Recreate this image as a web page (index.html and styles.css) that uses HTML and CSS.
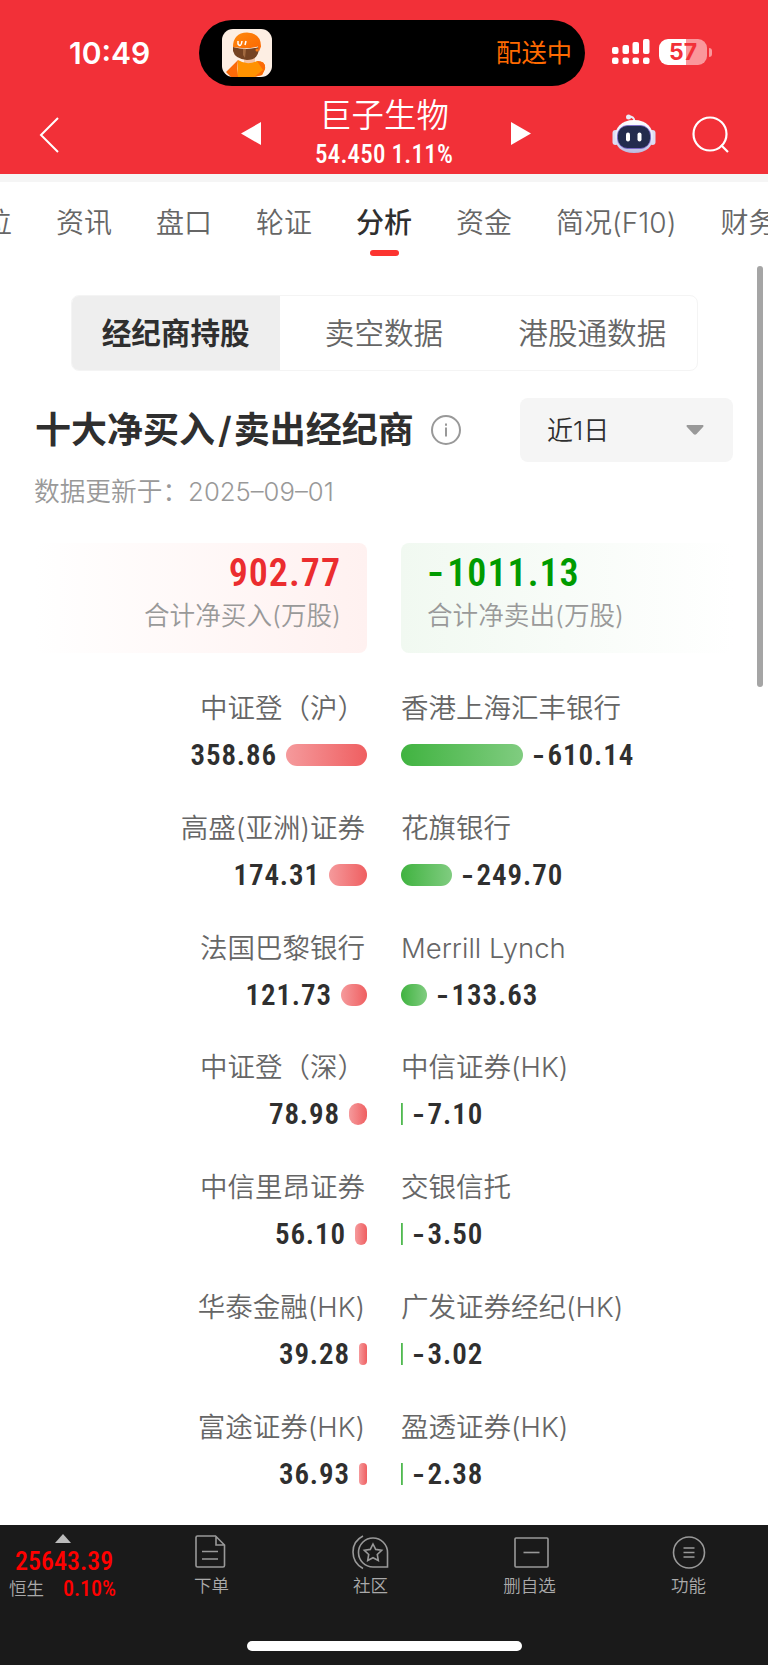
FILE: index.html
```html
<!DOCTYPE html>
<html lang="zh-CN">
<head>
    <meta charset="UTF-8">
    <meta name="viewport" content="width=device-width, initial-scale=1.0">
    <title>巨子生物 - 分析</title>
    <link rel="stylesheet" href="styles.css">
</head>
<body>
    <header class="header">
        <div class="status-bar">
            <span class="time">10:49</span>
            <div class="island">
                <svg class="courier" viewBox="0 0 50 48">
                    <defs>
                        <linearGradient id="helmet" x1="0" y1="0" x2="1" y2="1">
                            <stop offset="0" stop-color="#ff8a10"/>
                            <stop offset="1" stop-color="#fa6500"/>
                        </linearGradient>
                    </defs>
                    <rect width="50" height="48" rx="11" fill="#fdeee3"/>
                    <path d="M22 28h11v8H22z" fill="#f3c3a4"/>
                    <path d="M16 31q9 6 19 1 9 0 8 8l-3 6-8 2H15z" fill="#ff9200"/>
                    <path d="M4 43L16 31l-1 9 1 8H9zM35 32q9 0 8 8l-3 6-8 2 9-7z" fill="#fb6a08"/>
                    <path d="M11 18q14 4 26 0 0 13-12 13-12-1-14-9z" fill="#754322"/>
                    <path d="M21 20h3l-1 9-2-3z" fill="#a1693f"/>
                    <path d="M11 18Q11 4 25 3.500q14 0.500 14 14l-2 5-1-5q-12 3-25 0.500z" fill="url(#helmet)"/>
                    <path d="M16 12v3q3 4 4-3m3 4l1-4" fill="none" stroke="#fff" stroke-width="1.500"/>
                    <circle cx="35" cy="21" r="1.500" fill="#fb7a12"/>
                </svg>
                <span class="delivery">配送中</span>
            </div>
            <svg class="signal" viewBox="0 0 38 26" fill="#fff">
                <rect x="0" y="8" width="6.500" height="7" rx="2"/>
                <rect x="10.500" y="6" width="6.500" height="9" rx="2"/>
                <rect x="20.500" y="3" width="6.500" height="12" rx="2"/>
                <rect x="31" y="0" width="6.500" height="15" rx="2"/>
                <rect x="0" y="18.500" width="6.500" height="6.500" rx="2"/>
                <rect x="10.500" y="18.500" width="6.500" height="6.500" rx="2"/>
                <rect x="20.500" y="18.500" width="6.500" height="6.500" rx="2"/>
                <rect x="31" y="18.500" width="6.500" height="6.500" rx="2"/>
            </svg>
            <div class="battery">57</div>
            <span class="battery-tip"></span>
        </div>
        <div class="title-bar">
            <svg class="back" viewBox="0 0 20 36"><path d="M19 1L2 18l17 17"/></svg>
            <svg class="arrow prev" viewBox="0 0 20 23"><path d="M20 0v23L0 11.500z"/></svg>
            <div class="stock">
                <div class="stock-name">巨子生物</div>
                <div class="stock-price">54.450 1.11%</div>
            </div>
            <svg class="arrow next" viewBox="0 0 20 23"><path d="M0 0v23l20-11.500z"/></svg>
            <svg class="robot" viewBox="0 0 44 40">
                <defs>
                    <linearGradient id="shell" x1="0" y1="0" x2="0" y2="1">
                        <stop offset="0" stop-color="#fff"/>
                        <stop offset="0.600" stop-color="#e4e4f8"/>
                        <stop offset="1" stop-color="#b9b9df"/>
                    </linearGradient>
                </defs>
                <circle cx="16.500" cy="3" r="2.500" fill="#e9edf8"/>
                <path d="M17 2.500q5 0 5.500 4.500" fill="none" stroke="#e9edf8" stroke-width="1.800"/>
                <rect x="0.500" y="16" width="6" height="15" rx="3" fill="#dcdcf3"/>
                <rect x="37.500" y="16" width="6" height="15" rx="3" fill="#dcdcf3"/>
                <path d="M22 6c13 0 19 8 19 17s-6 16-19 16S3 32 3 23 9 6 22 6z" fill="url(#shell)"/>
                <rect x="5.500" y="11.500" width="33" height="23" rx="10" fill="#232b4d" stroke="#7a66d0" stroke-width="0.800"/>
                <rect x="14" y="18.500" width="4" height="9" rx="2" fill="#fff"/>
                <rect x="25.500" y="18.500" width="4" height="9" rx="2" fill="#fff"/>
            </svg>
            <svg class="search" viewBox="0 0 38 38"><circle cx="18" cy="18" r="16.500"/><path d="M29 29l7 7"/></svg>
        </div>
    </header>

    <nav class="tabs">
        <span class="tab">位</span>
        <span class="tab">资讯</span>
        <span class="tab">盘口</span>
        <span class="tab">轮证</span>
        <span class="tab active">分析</span>
        <span class="tab">资金</span>
        <span class="tab">简况(F10)</span>
        <span class="tab">财务</span>
    </nav>

    <main class="content">
        <div class="scrollbar"></div>
        <div class="segment">
            <div class="segment-item selected">经纪商持股</div>
            <div class="segment-item">卖空数据</div>
            <div class="segment-item">港股通数据</div>
        </div>

        <div class="section-head">
            <h2>十大净买入<span class="slash">/</span>卖出经纪商</h2>
            <svg class="info" viewBox="0 0 30 30"><circle cx="15" cy="15" r="14"/><path d="M15 12.500v9M15 8.500v2.200"/></svg>
            <div class="period">
                <span>近1日</span>
                <svg viewBox="0 0 18 10"><path d="M1 0h16q1 1 0 2l-6.500 7q-1.500 1.500-3 0L1 2Q0 1 1 0z"/></svg>
            </div>
        </div>
        <p class="updated">数据更新于：2025–09–01</p>

        <div class="board">
            <div class="total buy">
                <div class="total-num">902.77</div>
                <div class="total-label">合计净买入(万股)</div>
            </div>
            <div class="total sell">
                <div class="total-num"><span class="minus">-</span>1011.13</div>
                <div class="total-label">合计净卖出(万股)</div>
            </div>
        </div>

        <div class="brokers">
            <div class="broker buy">
                <div class="name">中证登（沪）</div>
                <div class="value"><span>358.86</span><i class="bar" style="width: 81px"></i></div>
            </div>
            <div class="broker sell">
                <div class="name">香港上海汇丰银行</div>
                <div class="value"><i class="bar" style="width: 122px"></i><span><span class="minus">-</span>610.14</span></div>
            </div>

            <div class="broker buy">
                <div class="name">高盛(亚洲)证券</div>
                <div class="value"><span>174.31</span><i class="bar" style="width: 38px"></i></div>
            </div>
            <div class="broker sell">
                <div class="name">花旗银行</div>
                <div class="value"><i class="bar" style="width: 51px"></i><span><span class="minus">-</span>249.70</span></div>
            </div>

            <div class="broker buy">
                <div class="name">法国巴黎银行</div>
                <div class="value"><span>121.73</span><i class="bar" style="width: 26px"></i></div>
            </div>
            <div class="broker sell">
                <div class="name">Merrill Lynch</div>
                <div class="value"><i class="bar" style="width: 26px"></i><span><span class="minus">-</span>133.63</span></div>
            </div>

            <div class="broker buy">
                <div class="name">中证登（深）</div>
                <div class="value"><span>78.98</span><i class="bar" style="width: 18px"></i></div>
            </div>
            <div class="broker sell">
                <div class="name">中信证券(HK)</div>
                <div class="value"><i class="bar thin" style="width: 2px"></i><span><span class="minus">-</span>7.10</span></div>
            </div>

            <div class="broker buy">
                <div class="name">中信里昂证券</div>
                <div class="value"><span>56.10</span><i class="bar" style="width: 12px"></i></div>
            </div>
            <div class="broker sell">
                <div class="name">交银信托</div>
                <div class="value"><i class="bar thin" style="width: 2px"></i><span><span class="minus">-</span>3.50</span></div>
            </div>

            <div class="broker buy">
                <div class="name">华泰金融(HK)</div>
                <div class="value"><span>39.28</span><i class="bar" style="width: 8px"></i></div>
            </div>
            <div class="broker sell">
                <div class="name">广发证券经纪(HK)</div>
                <div class="value"><i class="bar thin" style="width: 2px"></i><span><span class="minus">-</span>3.02</span></div>
            </div>

            <div class="broker buy">
                <div class="name">富途证券(HK)</div>
                <div class="value"><span>36.93</span><i class="bar" style="width: 8px"></i></div>
            </div>
            <div class="broker sell">
                <div class="name">盈透证券(HK)</div>
                <div class="value"><i class="bar thin" style="width: 2px"></i><span><span class="minus">-</span>2.38</span></div>
            </div>
        </div>
    </main>

    <footer class="footer">
        <div class="toolbar">
            <div class="index">
                <span class="index-arrow"></span>
                <div class="index-value">25643.39</div>
                <div class="index-row"><span>恒生</span><span class="index-pct">0.10%</span></div>
            </div>
            <div class="tool">
                <svg viewBox="0 0 40 36"><path d="M5.500 2h18l9 9v20.500q0 1.500-1.500 1.500H5.500Q4 33 4 31.500v-28Q4 2 5.500 2zM24 2v9h9M10 17.500h16M10 25h16"/></svg>
                <span>下单</span>
            </div>
            <div class="tool">
                <svg viewBox="0 0 40 36"><path d="M12 2Q2 7 2 18t10 16.500"/><path d="M36.500 33H22A14.500 14.500 0 1 1 36.500 18.500z"/><path d="M22 10l2.700 5.400 6 .9-4.400 4.200 1 6-5.300-2.800-5.300 2.800 1-6-4.400-4.200 6-.9z"/></svg>
                <span>社区</span>
            </div>
            <div class="tool">
                <svg viewBox="0 0 40 36"><rect x="5" y="4" width="33" height="29" rx="1"/><path d="M13.500 18.500h16"/></svg>
                <span>删自选</span>
            </div>
            <div class="tool">
                <svg viewBox="0 0 40 36"><circle cx="20" cy="18.500" r="15.500"/><path d="M14.500 14h11M14.500 18.500h11M14.500 23h11"/></svg>
                <span>功能</span>
            </div>
        </div>
        <div class="home-indicator"></div>
    </footer>
</body>
</html>
```
FILE: styles.css
```css
/* Reset margin and padding */
* {
    margin: 0;
    padding: 0;
    box-sizing: border-box;
}

body {
    width: 768px;
    height: 1665px;
    display: flex;
    flex-direction: column;
    overflow: hidden;
    font-family: Inter, "Noto Sans CJK SC", sans-serif;
    font-weight: 350;
    background-color: #fff;
    color: #666;
}

svg {
    display: block;
    flex: none;
}

/* Red header */
.header {
    height: 174px;
    flex: none;
    background-color: #f23038;
    color: #fff;
}

.status-bar {
    display: flex;
    align-items: center;
    height: 86px;
    padding-top: 20px;
}

.time {
    width: 199px;
    padding-left: 69px;
    font-size: 30px;
    font-weight: 600;
}

.island {
    display: flex;
    align-items: center;
    justify-content: space-between;
    width: 386px;
    height: 66px;
    padding: 0 13px 0 23px;
    border-radius: 33px;
    background-color: #000;
}

.courier {
    width: 50px;
    height: 48px;
}

.delivery {
    color: #ff6a00;
    font-size: 25.3px;
    font-weight: 400;
    line-height: 40px;
}

.signal {
    width: 38px;
    height: 26px;
    margin: 0 9px 2px 27px;
}

.battery {
    width: 48px;
    height: 26px;
    margin-bottom: 2px;
    border-radius: 9px;
    background: linear-gradient(to right, #fff 27px, #fa979b 27px);
    color: #f23038;
    font-size: 23px;
    font-weight: 700;
    line-height: 26px;
    text-align: center;
}

.battery-tip {
    width: 3px;
    height: 9px;
    margin: 0 0 2px 2px;
    border-radius: 0 4px 4px 0;
    background-color: #fa979b;
}

.title-bar {
    display: flex;
    align-items: center;
    height: 88px;
    padding-left: 39px;
}

.back {
    width: 20px;
    height: 36px;
    margin-top: 9px;
    fill: none;
    stroke: #fff;
    stroke-width: 2;
}

.arrow {
    width: 20px;
    height: 23px;
    margin-top: 7px;
    fill: #fff;
}

.prev {
    margin-left: 182px;
}

.next {
    margin-right: 81px;
}

.stock {
    width: 246px;
    height: 72px;
    margin-right: 4px;
    text-align: center;
}

.stock-name {
    font-size: 32.4px;
    line-height: 44px;
}

.stock-price {
    margin-top: 3px;
    font-family: Roboto, sans-serif;
    font-size: 25px;
    font-weight: 500;
    font-stretch: 87%;
    line-height: 28px;
    letter-spacing: 0.2px;
}

.robot {
    width: 44px;
    height: 40px;
    margin: 7px 36px 0 0;
}

.search {
    width: 38px;
    height: 38px;
    margin-top: 9px;
    fill: none;
    stroke: #fff;
    stroke-width: 2.2;
}

/* Scrolling tabs, first and last ones are cut by the screen edge */
.tabs {
    display: flex;
    flex: none;
    gap: 44px;
    height: 90px;
    padding-top: 21px;
    border-top: 8px solid #f5f5f5;
    overflow: hidden;
    font-size: 28px;
    line-height: 40px;
    white-space: nowrap;
}

.tab:first-child {
    margin-left: -16px;
}

.tab {
    flex: none;
}

.tab.active {
    color: #2f2f2f;
    font-weight: 500;
}

.tab.active::after {
    content: "";
    display: block;
    width: 29px;
    height: 6px;
    margin: 7px auto 0;
    border-radius: 3px;
    background-color: #fc3430;
}

.content {
    position: relative;
    flex: 1;
    padding: 31px 35px 0;
    overflow: hidden;
}

.scrollbar {
    position: absolute;
    top: 2px;
    right: 5px;
    width: 6px;
    height: 421px;
    border-radius: 3px;
    background-color: #a5a5a5;
}

/* Segmented control */
.segment {
    display: flex;
    width: 627px;
    height: 76px;
    margin: 0 auto;
    border: 1px solid #f4f4f4;
    border-radius: 8px;
    overflow: hidden;
}

.segment-item {
    flex: 1;
    font-size: 29.6px;
    line-height: 74px;
    text-align: center;
}

.segment-item.selected {
    background-color: #eee;
    color: #2f2f2f;
    font-weight: 600;
}

.section-head {
    display: flex;
    align-items: center;
    height: 64px;
    margin-top: 27px;
}

.section-head h2 {
    color: #2f2f2f;
    font-size: 36px;
    font-weight: 600;
    line-height: 50px;
}

.slash {
    padding: 0 2px 0 3px;
}

.info {
    width: 30px;
    height: 30px;
    margin-left: 17px;
    fill: none;
    stroke: #999;
    stroke-width: 2;
}

.period {
    display: flex;
    align-items: center;
    justify-content: space-between;
    width: 213px;
    height: 64px;
    margin-left: auto;
    padding: 0 29px 0 27px;
    border-radius: 8px;
    background-color: #f5f5f5;
    color: #2f2f2f;
    font-size: 26px;
}

.period span {
    margin-bottom: 3px;
}

.period svg {
    width: 18px;
    height: 10px;
    fill: #999;
}

.updated {
    margin: 12px 0 0 -1px;
    color: #999;
    font-size: 25.7px;
    line-height: 36px;
}

/* Totals */
.board {
    display: grid;
    grid-template-columns: 332px 332px;
    column-gap: 34px;
    margin-top: 33px;
}

.total {
    height: 110px;
    padding: 10px 26px 0;
    border-radius: 8px;
}

.total-num {
    font-family: Roboto, sans-serif;
    font-size: 38px;
    font-weight: 600;
    font-stretch: 78%;
    line-height: 41px;
    letter-spacing: 1px;
}

.total-label {
    color: #999;
    font-size: 25.6px;
    line-height: 44px;
}

.total.buy {
    background: linear-gradient(to right, #fff, #fff1f0);
    text-align: right;
}

.total.sell {
    background: linear-gradient(to left, #fff, #f1f9f1);
}

.buy .total-num {
    color: #eb2d2f;
}

.sell .total-num {
    color: #009b00;
}

/* Wide minus in front of the sell figures */
.minus {
    display: inline-block;
    transform: scaleX(1.35);
    transform-origin: left;
    margin-right: 0.17em;
}

/* Broker list, buyers on the left and sellers on the right */
.brokers {
    display: grid;
    grid-template-columns: 332px 332px;
    grid-auto-rows: 119.8px;
    column-gap: 34px;
    margin-top: 35px;
}

.name {
    font-size: 27.5px;
    line-height: 40px;
}

.buy .name {
    padding-right: 2px;
}

.value {
    display: flex;
    align-items: center;
    gap: 9px;
    height: 54px;
    color: #2f2f2f;
    font-family: Roboto, sans-serif;
    font-size: 29px;
    font-weight: 600;
    font-stretch: 78%;
    letter-spacing: 0.9px;
}

.broker.buy {
    text-align: right;
}

.broker.buy .value {
    justify-content: flex-end;
}

.bar {
    height: 22px;
    border-radius: 11px;
}

.buy .bar {
    background: linear-gradient(to right, #f59a9c, #ef5f61);
}

.sell .bar {
    background: linear-gradient(to right, #40b340, #80cc80);
}

.bar.thin {
    border-radius: 0;
}

/* Bottom toolbar */
.footer {
    flex: none;
    height: 140px;
    background-color: #1a1a1a;
    color: #aaa;
}

.toolbar {
    display: flex;
    height: 116px;
}

.index {
    width: 132px;
    padding-top: 9px;
}

.index-arrow {
    display: block;
    width: 0;
    margin-left: 55px;
    border: 8px solid transparent;
    border-top: none;
    border-bottom: 9px solid #bbb;
}

.index-value {
    margin-top: 4px;
    padding-left: 15px;
    color: #f00;
    font-family: Roboto, sans-serif;
    font-size: 26px;
    font-weight: 500;
    font-stretch: 85%;
    line-height: 29px;
}

.index-row {
    display: flex;
    gap: 19px;
    padding-left: 9px;
    font-size: 17.5px;
    line-height: 26px;
}

.index-pct {
    color: #f00;
    font-family: Roboto, sans-serif;
    font-size: 22px;
    font-weight: 500;
    font-stretch: 85%;
}

.tool {
    display: flex;
    flex-direction: column;
    align-items: center;
    width: 159px;
    padding-top: 9px;
    font-size: 17.5px;
    line-height: 28px;
}

.tool svg {
    width: 40px;
    height: 36px;
    margin-bottom: 2px;
    fill: none;
    stroke: #999;
    stroke-width: 1.6;
}

.home-indicator {
    width: 275px;
    height: 10px;
    margin: 0 auto;
    border-radius: 5px;
    background-color: #fff;
}
```
